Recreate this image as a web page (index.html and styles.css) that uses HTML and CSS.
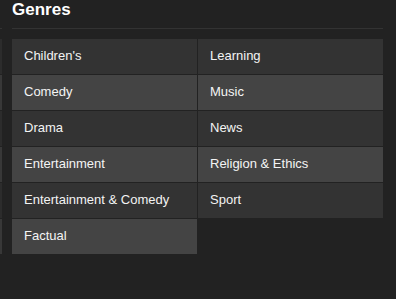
FILE: index.html
```html
<!DOCTYPE html>
<html lang="en">
<head>
  <meta charset="UTF-8">
  <title>Genres</title>
  <link rel="stylesheet" href="styles.css">
</head>
<body>

  <div class="track">
    <!-- edge of the previous panel -->
    <div class="peek">
      <div class="peek-rule"></div>
      <div class="peek-cells">
        <div class="peek-cell"></div>
        <div class="peek-cell"></div>
        <div class="peek-cell"></div>
        <div class="peek-cell"></div>
        <div class="peek-cell"></div>
        <div class="peek-cell"></div>
      </div>
    </div>

    <!-- Genres panel -->
    <div class="panel">
      <h2 class="panel-title">Genres</h2>
      <ul class="genre-grid">
        <li class="genre">Children's</li>
        <li class="genre">Learning</li>
        <li class="genre alt">Comedy</li>
        <li class="genre alt">Music</li>
        <li class="genre">Drama</li>
        <li class="genre">News</li>
        <li class="genre alt">Entertainment</li>
        <li class="genre alt">Religion &amp; Ethics</li>
        <li class="genre">Entertainment &amp; Comedy</li>
        <li class="genre">Sport</li>
        <li class="genre alt">Factual</li>
      </ul>
    </div>
  </div>

</body>
</html>
```

FILE: styles.css
```css
* {
  box-sizing: border-box;
}

body {
  margin: 0;
  font-family: "Liberation Sans", Arial, sans-serif;
  background-color: #222222;
  color: #ffffff;
  height: 299px;
  overflow: hidden;
}

.track {
  display: flex;
}

/* Sliver of the panel to the left */
.peek {
  width: 2px;
  flex: none;
  margin-right: 10px;
}

.peek-rule {
  height: 1px;
  margin-top: 28px;
  background-color: #333333;
}

.peek-cells {
  display: flex;
  flex-direction: column;
  gap: 1px;
  margin-top: 10px;
}

.peek-cell {
  height: 35px;
  background-color: #2c2c2c;
}

.peek-cell:nth-child(even) {
  background-color: #383838;
}

/* Genres */
.panel {
  width: 371px;
  flex: none;
}

.panel-title {
  margin: 0;
  height: 28px;
  padding-top: 0;
  font-size: 17px;
  font-weight: bold;
  line-height: 20px;
  border-bottom: 1px solid #333333;
  box-sizing: content-box;
}

.genre-grid {
  list-style: none;
  margin: 10px 0 0;
  padding: 0;
  display: grid;
  grid-template-columns: 185px 185px;
  gap: 1px;
}

.genre {
  height: 35px;
  line-height: 34px;
  padding-left: 12px;
  font-size: 13px;
  color: #f4f4f4;
  background-color: #333333;
  white-space: nowrap;
}

.genre.alt {
  background-color: #444444;
}
```
